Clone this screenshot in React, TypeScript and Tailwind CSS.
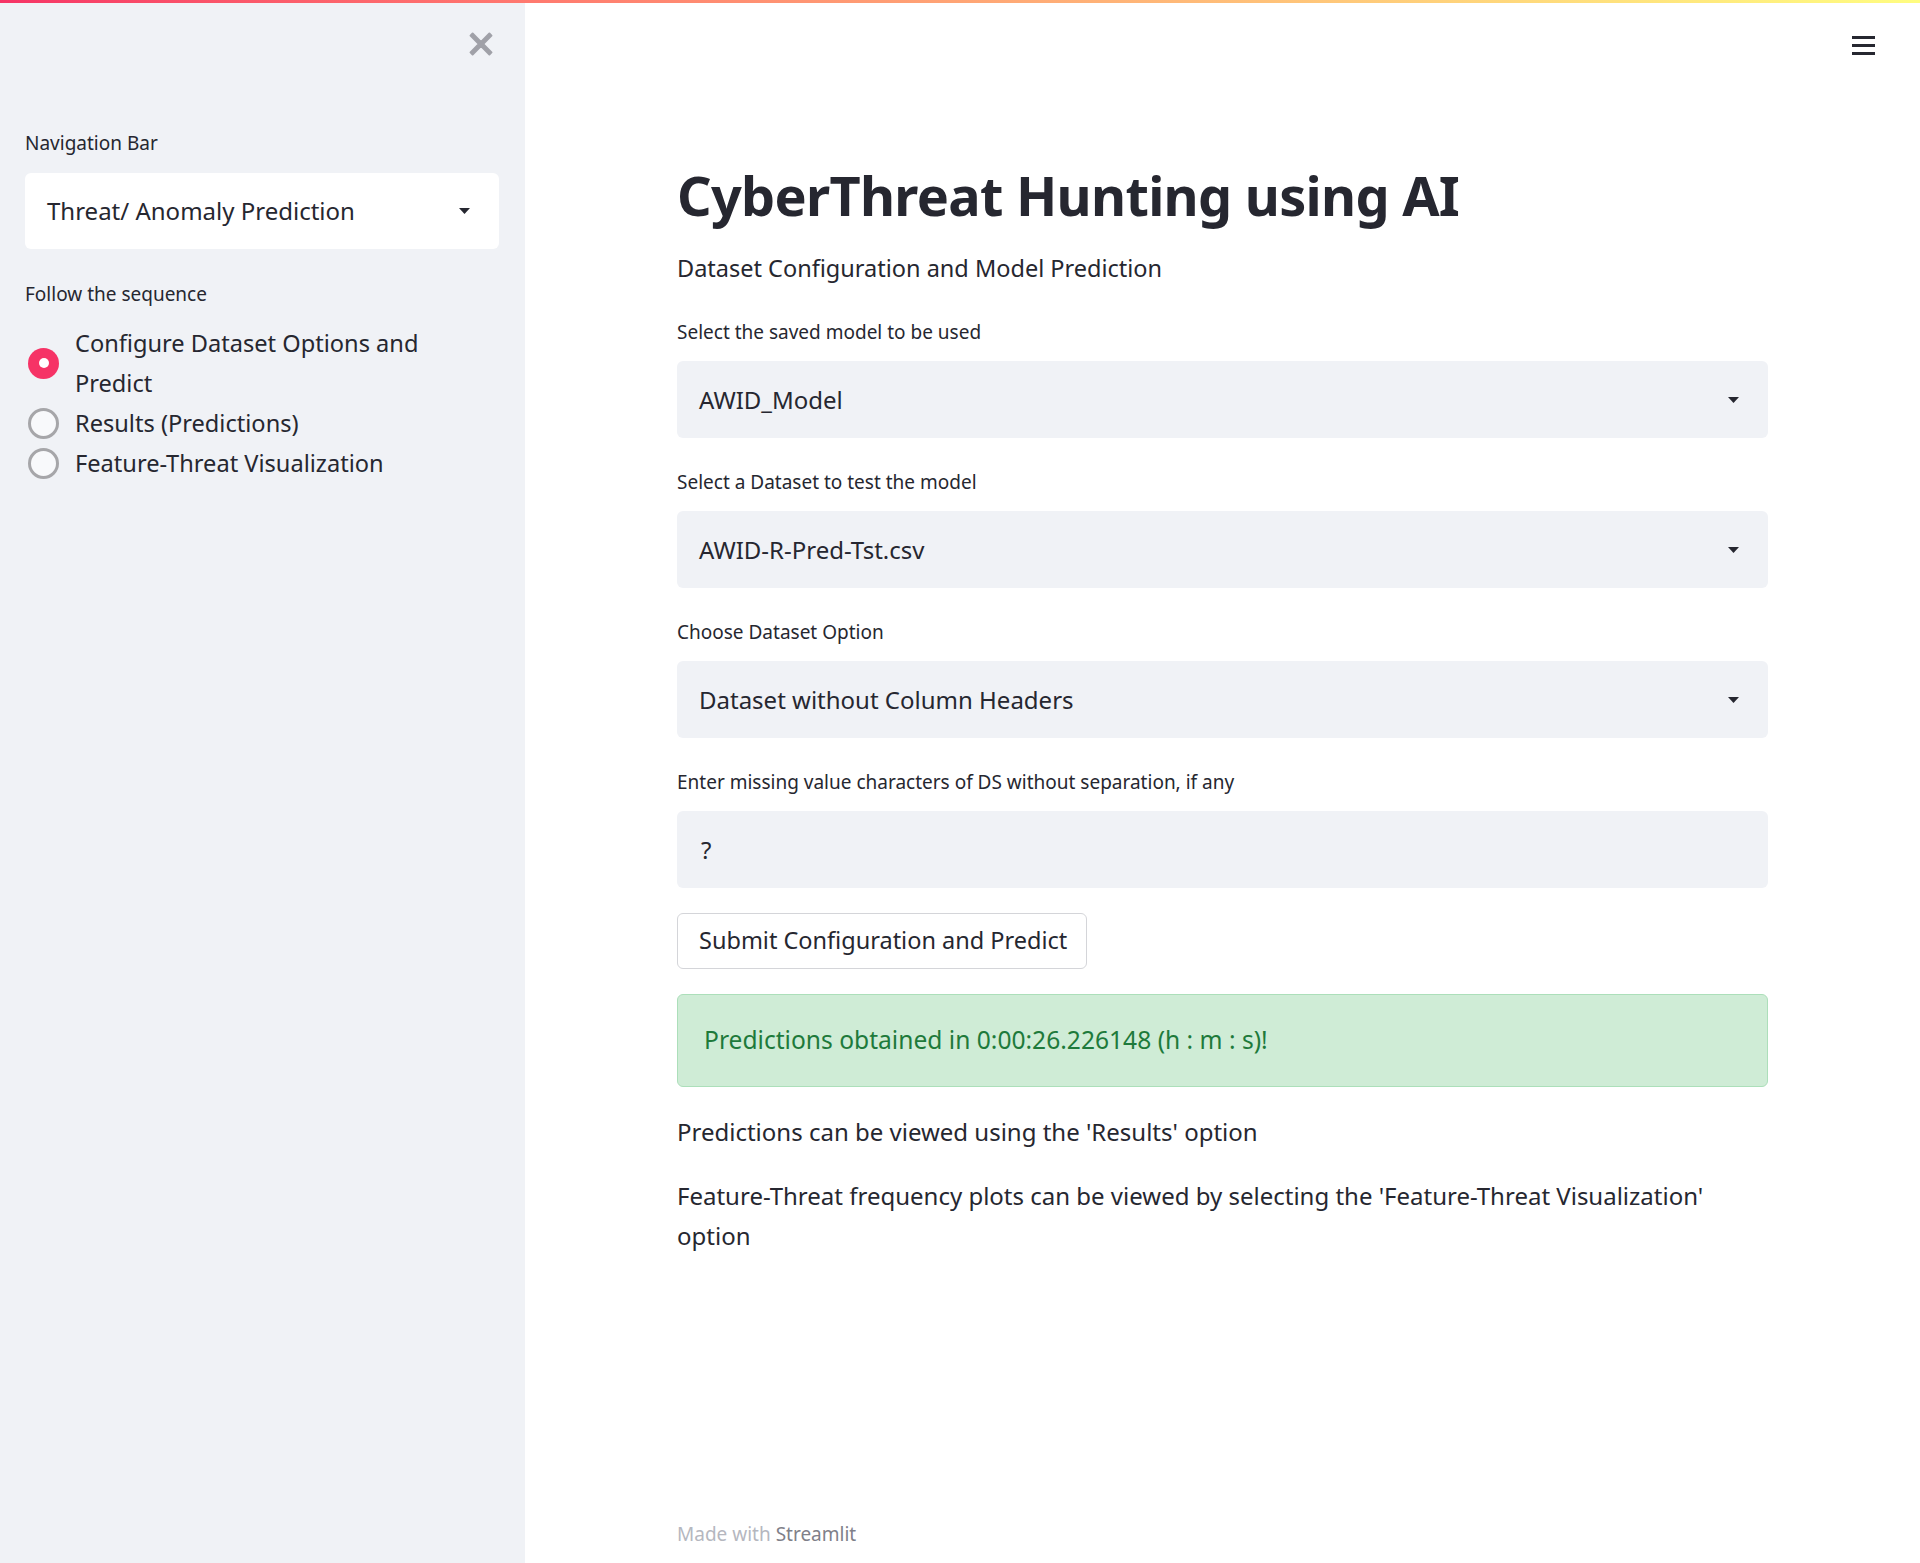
import React from "react";

const font = { fontFamily: '"Noto Sans", "Open Sans", sans-serif' };

const Caret = () => (
  <svg width="11" height="6" viewBox="0 0 11 6">
    <polygon points="0,0 11,0 5.5,6" fill="#262730" />
  </svg>
);

const Radio: React.FC<{ label: React.ReactNode; checked?: boolean }> = ({ label, checked }) => (
  <div className="flex items-center">
    <div className="w-[37px] flex justify-start pl-[3px]">
      {checked ? (
        <div className="w-[31px] h-[31px] rounded-full bg-[#f63366] flex items-center justify-center">
          <div className="w-[10px] h-[10px] rounded-full bg-white" />
        </div>
      ) : (
        <div className="w-[31px] h-[31px] rounded-full border-[3px] border-[#a6a6a9] bg-[#f8f9fb]" />
      )}
    </div>
    <div className="w-[380px] text-[23.6px] leading-[40px] text-[#262730] pl-[13px]">{label}</div>
  </div>
);

// labeled selectbox like the streamlit widget
const Select: React.FC<{ label: string; value: string }> = ({ label, value }) => (
  <div className="mt-[28px]">
    <div className="h-[32px] leading-[32px] text-[19px] text-[#262730] mb-[13px]">{label}</div>
    <div className="h-[77px] bg-[#f0f2f6] rounded-[6px] flex items-center justify-between pl-[22px] pr-[29px]">
      <span className="text-[24px] text-[#262730]">{value}</span>
      <Caret />
    </div>
  </div>
);

const App: React.FC = () => {
  return (
    <div className="w-[1920px] h-[1563px] flex flex-col bg-white overflow-hidden" style={font}>
      <div className="h-[3px] bg-linear-to-r from-[#f63366] to-[#fffd80]" />
      <div className="flex flex-1">
        {/* Sidebar */}
        <div className="w-[525px] shrink-0 bg-[#f0f2f6] flex flex-col px-[25px]">
          <div className="flex justify-end pt-[23px] pr-[1px]">
            <svg width="36" height="36" viewBox="0 0 24 24">
              <path
                d="M19 6.41L17.59 5 12 10.59 6.41 5 5 6.41 10.59 12 5 17.59 6.41 19 12 13.41 17.59 19 19 17.59 13.41 12z"
                fill="#a0a1a8"
                stroke="#a0a1a8"
                strokeWidth="1.3"
                strokeLinejoin="round"
              />
            </svg>
          </div>
          <div className="mt-[65px] h-[32px] leading-[32px] text-[19px] text-[#262730]">Navigation Bar</div>
          <div className="mt-[14px] h-[76px] w-[474px] bg-white rounded-[6px] flex items-center justify-between pl-[22px] pr-[29px]">
            <span className="text-[24px] text-[#262730]">Threat/ Anomaly Prediction</span>
            <Caret />
          </div>
          <div className="mt-[29px] h-[32px] leading-[32px] text-[19px] text-[#262730]">Follow the sequence</div>
          <div className="mt-[13px] flex flex-col">
            <Radio checked label="Configure Dataset Options and Predict" />
            <Radio label="Results (Predictions)" />
            <Radio label="Feature-Threat Visualization" />
          </div>
        </div>

        {/* Main */}
        <div className="flex-1 flex flex-col">
          <div className="h-[84px] flex items-center justify-end pr-[45px]">
            <div className="flex flex-col gap-[5px]">
              <div className="w-[23px] h-[3px] bg-[#262730]" />
              <div className="w-[23px] h-[3px] bg-[#262730]" />
              <div className="w-[23px] h-[3px] bg-[#262730]" />
            </div>
          </div>
          <div className="w-[1091px] mx-auto flex-1 flex flex-col pt-[72px] text-[#262730]">
            <h1 className="text-[54px] leading-[72px] font-bold tracking-[-0.7px]">CyberThreat Hunting using AI</h1>
            <div className="mt-[17px] text-[23.5px] leading-[40px]">Dataset Configuration and Model Prediction</div>

            <Select label="Select the saved model to be used" value="AWID_Model" />
            <Select label="Select a Dataset to test the model" value="AWID-R-Pred-Tst.csv" />
            <Select label="Choose Dataset Option" value="Dataset without Column Headers" />

            <div className="mt-[28px]">
              <div className="h-[32px] leading-[32px] text-[19px] mb-[13px]">
                Enter missing value characters of DS without separation, if any
              </div>
              <div className="h-[77px] bg-[#f0f2f6] rounded-[6px] flex items-center pl-[24px]">
                <span className="text-[24px]">?</span>
              </div>
            </div>

            <div className="mt-[25px]">
              <button className="h-[56px] w-[410px] bg-white border border-[#d4d5d9] rounded-[6px] text-[23.5px] text-left pl-[21px] whitespace-nowrap">
                Submit Configuration and Predict
              </button>
            </div>

            <div className="mt-[25px] h-[93px] bg-[#cfecd6] border border-[#acdfba] rounded-[6px] flex items-center pl-[26px]">
              <span className="text-[24.6px] text-[#1e7a3b]">Predictions obtained in 0:00:26.226148 (h : m : s)!</span>
            </div>

            <p className="mt-[25px] text-[24px] leading-[40px]">Predictions can be viewed using the 'Results' option</p>
            <p className="mt-[24px] text-[24px] leading-[40px] max-w-[1060px]">
              Feature-Threat frequency plots can be viewed by selecting the 'Feature-Threat Visualization' option
            </p>

            <div className="mt-auto pb-[15px] h-[43px] leading-[28px] text-[19px]">
              <span className="text-[#b5b7bf]">Made with </span>
              <span className="text-[#7f8089]">Streamlit</span>
            </div>
          </div>
        </div>
      </div>
    </div>
  );
};

export default App;
